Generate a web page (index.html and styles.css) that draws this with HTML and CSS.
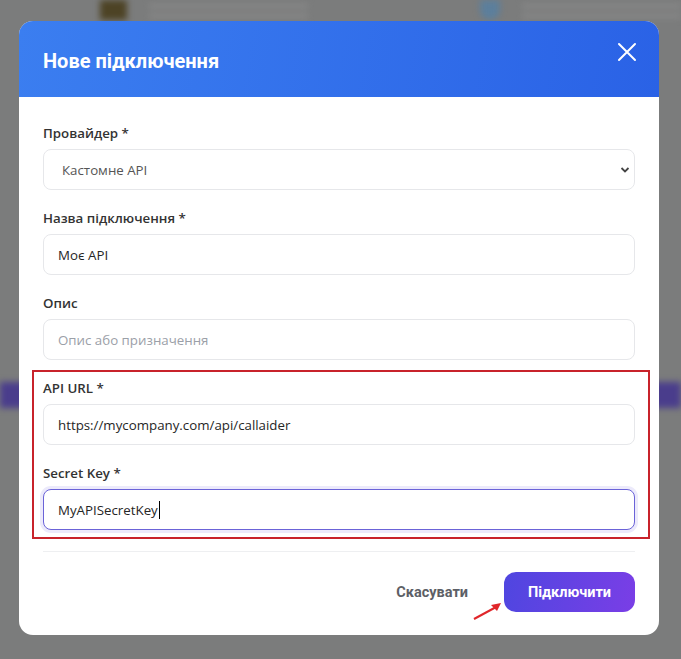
FILE: index.html
```html
<!DOCTYPE html>
<html lang="uk">
<head>
	<meta charset="UTF-8">
	<title>Нове підключення</title>
	<link rel="stylesheet" href="styles.css">
</head>
<body>

	<!-- сторінка під модальним вікном (розмита) -->
	<div class="page">
		<div class="page-top">
			<div class="thumb"></div>
			<div class="lines"><span></span><span></span></div>
			<div class="avatar"></div>
			<div class="lines"><span></span><span></span></div>
		</div>
		<div class="page-side left"></div>
		<div class="page-side right"></div>
	</div>

	<div class="overlay">
		<div class="modal">
			<div class="modal-header">
				<h2>Нове підключення</h2>
				<button class="close" type="button" aria-label="Закрити">
					<svg width="20" height="20" viewBox="0 0 20 20"><path d="M2 2L18 18M18 2L2 18" stroke="#fff" stroke-width="2" stroke-linecap="round"/></svg>
				</button>
			</div>

			<div class="modal-body">
				<div class="field">
					<label>Провайдер *</label>
					<div class="select">
						<span>Кастомне API</span>
						<svg width="10" height="8" viewBox="0 0 10 8"><path d="M1.5 2L5 5.5L8.5 2" fill="none" stroke="#444" stroke-width="1.8"/></svg>
					</div>
				</div>
				<div class="field">
					<label>Назва підключення *</label>
					<input class="input" type="text" value="Моє API">
				</div>
				<div class="field">
					<label>Опис</label>
					<input class="input" type="text" placeholder="Опис або призначення">
				</div>

				<div class="highlight">
					<div class="field">
						<label>API URL *</label>
						<input class="input" type="text" value="https://mycompany.com/api/callaider">
					</div>
					<div class="field">
						<label>Secret Key *</label>
						<div class="input focused">MyAPISecretKey<span class="caret"></span></div>
					</div>
				</div>
			</div>

			<div class="modal-footer">
				<button class="btn-cancel" type="button">Скасувати</button>
				<button class="btn-primary" type="button">Підключити</button>
				<svg class="arrow" width="32" height="20" viewBox="0 0 32 20"><path d="M2 18L26 5" stroke="#e0262a" stroke-width="2"/><path d="M29 2L19 4L25 10Z" fill="#e0262a"/></svg>
			</div>
		</div>
	</div>

</body>
</html>
```

FILE: styles.css
```css
body{
	margin: 0;
	width: 681px;
	height: 659px;
	overflow: hidden;
	background: #7b7c7c;
	font: 13.3px/20px "Open Sans", "Noto Sans", sans-serif;
	color: #2b2b2b;
}
.page{
	height: 100%;
	filter: blur(3px);
}
.page-top{
	display: flex;
	align-items: flex-start;
	gap: 22px;
	padding-left: 100px;
	height: 40px;
}
.thumb{
	width: 30px;
	height: 20px;
	background: #4d4325;
}
.lines{
	display: flex;
	flex-direction: column;
	gap: 6px;
	padding-top: 4px;
	width: 180px;
}
.lines span{
	height: 4px;
	background: #8a8a8a;
}
.avatar{
	width: 22px;
	height: 20px;
	margin-left: 150px;
	border-radius: 0 0 11px 11px;
	background: #5c7f9c;
}
.page-side{
	position: absolute;
	top: 382px;
	width: 30px;
	height: 26px;
	background: #4a3d8c;
}
.page-side.left{ left: 0; }
.page-side.right{ right: 0; }

.overlay{
	position: absolute;
	top: 0;
	left: 0;
	right: 0;
	bottom: 0;
	padding: 21px 22px 0 19px;
}
.modal{
	width: 640px;
	background: #fff;
	border-radius: 14px;
	overflow: hidden;
}
.modal-header{
	display: flex;
	align-items: center;
	justify-content: space-between;
	height: 76px;
	padding: 0 22px 0 24px;
	box-sizing: border-box;
	background: linear-gradient(100deg, #3b7ef0, #2a62e6);
}
.modal-header h2{
	margin: 0;
	padding-top: 3px;
	font: bold 20px/24px Roboto, sans-serif;
	color: #fff;
}
.close{
	border: 0;
	padding: 0;
	background: none;
	margin-bottom: 14px;
	display: flex;
}
.modal-body{
	padding: 26px 24px 12px;
}
.field{
	margin-bottom: 18px;
}
.field label{
	display: block;
	margin-bottom: 6px;
	font-weight: 600;
	color: #333;
}
.input, .select{
	display: flex;
	align-items: center;
	width: 100%;
	height: 41px;
	box-sizing: border-box;
	padding: 0 14px;
	border: 1px solid #e6e7ea;
	border-radius: 8px;
	background: #fff;
	font: inherit;
	color: #262626;
	outline: none;
}
.input::placeholder{
	color: #9ba0a8;
}
.select{
	justify-content: space-between;
	padding: 0 4px 0 18px;
	color: #555;
}
.focused{
	border-color: #6b63d8;
	box-shadow: 0 0 0 3px #eceafb;
}
.caret{
	width: 1px;
	height: 18px;
	margin-left: 1px;
	background: #000;
}
.highlight{
	margin: -8px -15px 0 -11px;
	padding: 6px 13px 0 9px;
	border: 2px solid #c8232b;
}
.highlight .field:last-child{
	margin-bottom: 7px;
}
.modal-footer{
	position: relative;
	display: flex;
	justify-content: flex-end;
	align-items: center;
	gap: 16px;
	margin: 0 24px;
	padding: 20px 0 23px;
	border-top: 1px solid #eeeff1;
}
.btn-cancel{
	border: 0;
	background: none;
	padding: 0 20px;
	font: bold 14.5px Roboto, sans-serif;
	color: #5d5f66;
}
.btn-primary{
	width: 131px;
	height: 40px;
	border: 0;
	border-radius: 12px;
	background: linear-gradient(100deg, #4f46e0, #7a3ee6);
	font: bold 14.5px Roboto, sans-serif;
	color: #fff;
}
.arrow{
	position: absolute;
	left: 429px;
	bottom: 14px;
}
```
